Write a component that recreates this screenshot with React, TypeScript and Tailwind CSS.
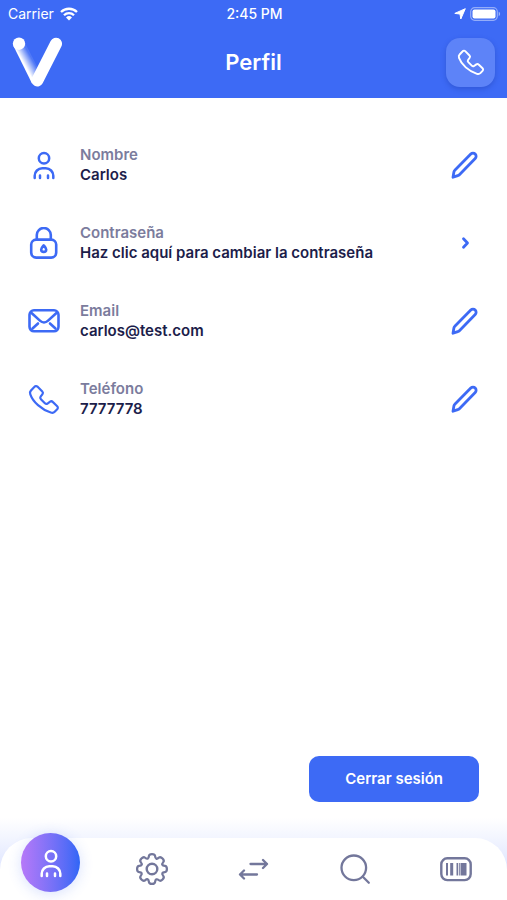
import type { ReactNode } from "react";

const stroke = {
  fill: "none",
  stroke: "currentColor",
  strokeLinecap: "round" as const,
  strokeLinejoin: "round" as const,
};

function PersonIcon() {
  return (
    <svg viewBox="0 0 32 32" className="w-8 h-8" strokeWidth="2.5" {...stroke} aria-hidden="true">
      <circle cx="16" cy="9.3" r="5.2" />
      <path d="M6.7 29v-2.2a7.5 7.5 0 0 1 7.5-7.5h3.6a7.5 7.5 0 0 1 7.5 7.5V29M12 26.4V29M20 26.4V29" />
    </svg>
  );
}

function LockIcon() {
  return (
    <svg viewBox="0 0 32 32" className="w-8 h-8" strokeWidth="2.6" {...stroke} aria-hidden="true">
      <rect x="3.2" y="12.6" width="25" height="18" rx="5" />
      <path d="M8.8 12.4V8a7 7 0 0 1 14 0v4.4" />
      <path d="M15.7 18.4c1.7 2 2.5 2.8 2.5 4a2.5 2.5 0 0 1-5 0c0-1.2.8-2 2.5-4Z" />
    </svg>
  );
}

function MailIcon() {
  return (
    <svg viewBox="0 0 32 32" className="w-8 h-8" strokeWidth="2.6" {...stroke} aria-hidden="true">
      <rect x="1.5" y="5.3" width="29" height="21" rx="4.5" />
      <path d="M3 7.5l9.2 8.4a5.6 5.6 0 0 0 7.6 0L29 7.5M4.5 23.5l5.5-5M27.5 23.5L22 18.5" />
    </svg>
  );
}

function PhoneIcon({ className }: { className: string }) {
  return (
    <svg viewBox="0 0 32 32" className={className} strokeWidth="2.2" {...stroke} aria-hidden="true">
      <path d="M9.4 3.600l4.900 5a2 2 0 0 1 .2 2.600l-1.900 2.500c-.6.9-.4 1.800.3 2.500l4 4c.8.8 1.700 1 2.600.4l2.600-1.900a2 2 0 0 1 2.600.2l4.500 4.300a2.100 2.100 0 0 1 0 3l-2.500 2.600c-1 1-2.400 1.200-3.900.7C13.300 26.500 5 18.900 2.300 11.300c-.5-1.500-.3-2.900.7-3.900l3.500-3.700a2 2 0 0 1 2.900-.1Z" />
    </svg>
  );
}

function PencilIcon() {
  return (
    <svg viewBox="0 0 28 28" className="w-7 h-7" strokeWidth="2.8" {...stroke} aria-hidden="true">
      <path d="M2 26.200l.9-5.300a3 3 0 0 1 .9-1.700L19.800 3.100a3.100 3.100 0 0 1 4.400 4.400L8.400 23.700a3 3 0 0 1-1.600.9Z" />
    </svg>
  );
}

function ChevronIcon() {
  return (
    <svg viewBox="0 0 28 28" className="w-7 h-7" strokeWidth="2.8" {...stroke} aria-hidden="true">
      <path d="M12.5 9.8l4 4.2-4 4.2" />
    </svg>
  );
}

// eight rounded teeth, smoothed through the midpoints of the corner points
function gearPath() {
  const points: [number, number][] = [];
  for (let tooth = 0; tooth < 8; tooth++) {
    for (const [offset, radius] of [[-11, 16.2], [11, 16.2], [17, 12], [28, 12]]) {
      const angle = ((tooth * 45 + offset) * Math.PI) / 180;
      points.push([16 + radius * Math.sin(angle), 16 - radius * Math.cos(angle)]);
    }
  }
  const middle = (i: number) => {
    const a = points[i % points.length];
    const b = points[(i + 1) % points.length];
    return `${((a[0] + b[0]) / 2).toFixed(2)} ${((a[1] + b[1]) / 2).toFixed(2)}`;
  };
  const curves = points.map((_, i) => {
    const [x, y] = points[(i + 1) % points.length];
    return `Q${x.toFixed(2)} ${y.toFixed(2)} ${middle(i + 1)}`;
  });
  return `M${middle(0)}${curves.join("")}Z`;
}

function GearIcon() {
  return (
    <svg viewBox="0 0 32 32" className="w-8 h-8 overflow-visible" strokeWidth="2.4" {...stroke} aria-hidden="true">
      <path d={gearPath()} transform="translate(1 1) scale(0.9375)" />
      <circle cx="16" cy="16" r="5.3" />
    </svg>
  );
}

function ArrowsIcon() {
  return (
    <svg viewBox="0 0 32 32" className="w-8 h-8" strokeWidth="2.3" {...stroke} aria-hidden="true">
      <path d="M13.500 11H30M26 7l4 4-4 4M20 21.500H3M7 17.500l-4 4 4 4" />
    </svg>
  );
}

function SearchIcon() {
  return (
    <svg viewBox="0 0 32 32" className="w-8 h-8" strokeWidth="2.3" {...stroke} aria-hidden="true">
      <circle cx="14.8" cy="14.800" r="12.3" />
      <path d="M23.800 23.800l6 6" />
    </svg>
  );
}

function BarcodeIcon() {
  return (
    <svg viewBox="0 0 32 32" className="w-8 h-8" {...stroke} aria-hidden="true">
      <rect x="1.3" y="5.3" width="29.4" height="21.8" rx="6" strokeWidth="2.4" />
      <path d="M6 10h2v12.500H6zM10.200 10h3v12.500h-3zM16.500 10h1.500v12.500h-1.500zM18.800 10h1v12.500h-1zM20.500 10h6v12.500h-6z" fill="currentColor" stroke="none" />
    </svg>
  );
}

function Logo() {
  return (
    <svg viewBox="0 0 50 52" className="w-[50px] h-[52px]" role="img" aria-label="V">
      <defs>
        <linearGradient id="leg" gradientUnits="userSpaceOnUse" x1="12" y1="30" x2="21" y2="25">
          <stop offset="0.1" stopColor="#fff" />
          <stop offset="1" stopColor="#fff" stopOpacity="0.1" />
        </linearGradient>
      </defs>
      <path d="M1.5 10L20 47.500L30 40L12.500 6Z" fill="url(#leg)" />
      <path d="M25.300 44.500L44 7.700" stroke="#fff" strokeWidth="12" strokeLinecap="round" />
      <circle cx="7" cy="7.700" r="6.200" fill="#fff" />
    </svg>
  );
}

function StatusBar() {
  return (
    <div className="grid grid-cols-3 items-center h-7 pl-2 pr-1.5 text-sm leading-5">
      <div className="flex items-center gap-1.5">
        <span>Carrier</span>
        <svg viewBox="0 0 18 14" className="w-[18px] h-[14px]" fill="none" stroke="#fff" aria-hidden="true">
          <path d="M1 5a11.500 11.500 0 0 1 16 0M4 8.200a7 7 0 0 1 10 0" strokeWidth="2.3" />
          <path d="M9 13.500L6 10.500a4.300 4.300 0 0 1 6 0Z" fill="#fff" stroke="none" />
        </svg>
      </div>
      <span className="text-center font-medium">2:45 PM</span>
      <div className="flex items-center justify-end gap-1">
        <svg viewBox="0 0 12 12" className="w-3 h-3" fill="#fff" stroke="#fff" strokeLinejoin="round" aria-hidden="true">
          <path d="M11.300 0.700L6.800 11L6 6L0.800 5.400Z" />
        </svg>
        <svg viewBox="0 0 31 14" className="w-[31px] h-[14px]" aria-hidden="true">
          <rect x="0.7" y="0.7" width="26.6" height="12.6" rx="4" fill="none" stroke="#fff" strokeOpacity="0.45" strokeWidth="1.2" />
          <rect x="2.5" y="2.5" width="23" height="9" rx="2" fill="#fff" />
          <path d="M28.700 4.800v4.400a2.400 2.400 0 0 0 0-4.400Z" fill="#fff" fillOpacity="0.5" />
        </svg>
      </div>
    </div>
  );
}

const fields = [
  { label: "Nombre", value: "Carlos", icon: <PersonIcon />, action: <PencilIcon />, actionLabel: "Editar nombre" },
  {
    label: "Contraseña",
    value: "Haz clic aquí para cambiar la contraseña",
    icon: <LockIcon />,
    action: <ChevronIcon />,
    actionLabel: "Cambiar contraseña",
  },
  { label: "Email", value: "carlos@test.com", icon: <MailIcon />, action: <PencilIcon />, actionLabel: "Editar email" },
  {
    label: "Teléfono",
    value: "7777778",
    icon: <PhoneIcon className="w-8 h-8" />,
    action: <PencilIcon />,
    actionLabel: "Editar teléfono",
  },
];

const tabs: { label: string; icon: ReactNode }[] = [
  { label: "Ajustes", icon: <GearIcon /> },
  { label: "Transferir", icon: <ArrowsIcon /> },
  { label: "Buscar", icon: <SearchIcon /> },
  { label: "Código de barras", icon: <BarcodeIcon /> },
];

export default function App() {
  return (
    <div className="min-h-screen flex flex-col bg-white font-['Inter','Liberation_Sans',sans-serif]">
      <header className="bg-[#3d6af5] text-white">
        <StatusBar />
        <div className="grid grid-cols-3 items-center px-3 pt-2 pb-2.5">
          <Logo />
          <h1 className="text-center text-[22px] leading-7 font-semibold">Perfil</h1>
          <button
            type="button"
            aria-label="Llamar"
            className="justify-self-end w-[49px] h-[49px] rounded-[14px] bg-[#5d83f8] shadow-[0_2px_5px_rgba(30,60,170,0.4)] flex items-center justify-center"
          >
            <PhoneIcon className="w-7 h-7" />
          </button>
        </div>
      </header>

      <main className="flex-1 flex flex-col px-7 pt-[47px] pb-9">
        <ul className="flex flex-col gap-[38px]">
          {fields.map((field) => (
            <li key={field.label} className="flex items-center gap-5">
              <span className="w-8 flex justify-center shrink-0 text-[#3d6af5]">{field.icon}</span>
              <div className="flex-1 text-[15px] leading-5 font-semibold">
                <p className="text-[#7b7c9d]">{field.label}</p>
                <p className="text-[#1c1d4a]">{field.value}</p>
              </div>
              <button type="button" aria-label={field.actionLabel} className="shrink-0 text-[#3d6af5]">
                {field.action}
              </button>
            </li>
          ))}
        </ul>
        <button
          type="button"
          className="mt-auto self-end px-9 py-[13px] rounded-[10px] bg-[#3d6af5] text-white text-[15px] leading-5 font-semibold"
        >
          Cerrar sesión
        </button>
      </main>

      <footer className="bg-linear-to-b from-white via-[#f2f5ff] via-25% to-[#e0e6ff] to-60% -mt-5 pt-5">
        <nav className="grid grid-cols-5 grid-rows-[62px] rounded-t-[32px] bg-white text-[#73779b]">
          <div className="flex items-end justify-center pb-2">
            <a
              href="#perfil"
              aria-label="Perfil"
              aria-current="page"
              className="w-[59px] h-[59px] shrink-0 rounded-full flex items-center justify-center text-white bg-linear-to-r from-[#b678f8] to-[#2f66f6] shadow-[0_2px_14px_rgba(61,106,245,0.2)]"
            >
              <PersonIcon />
            </a>
          </div>
          {tabs.map((tab) => (
            <a key={tab.label} href="#" aria-label={tab.label} className="flex items-center justify-center">
              {tab.icon}
            </a>
          ))}
        </nav>
      </footer>
    </div>
  );
}
